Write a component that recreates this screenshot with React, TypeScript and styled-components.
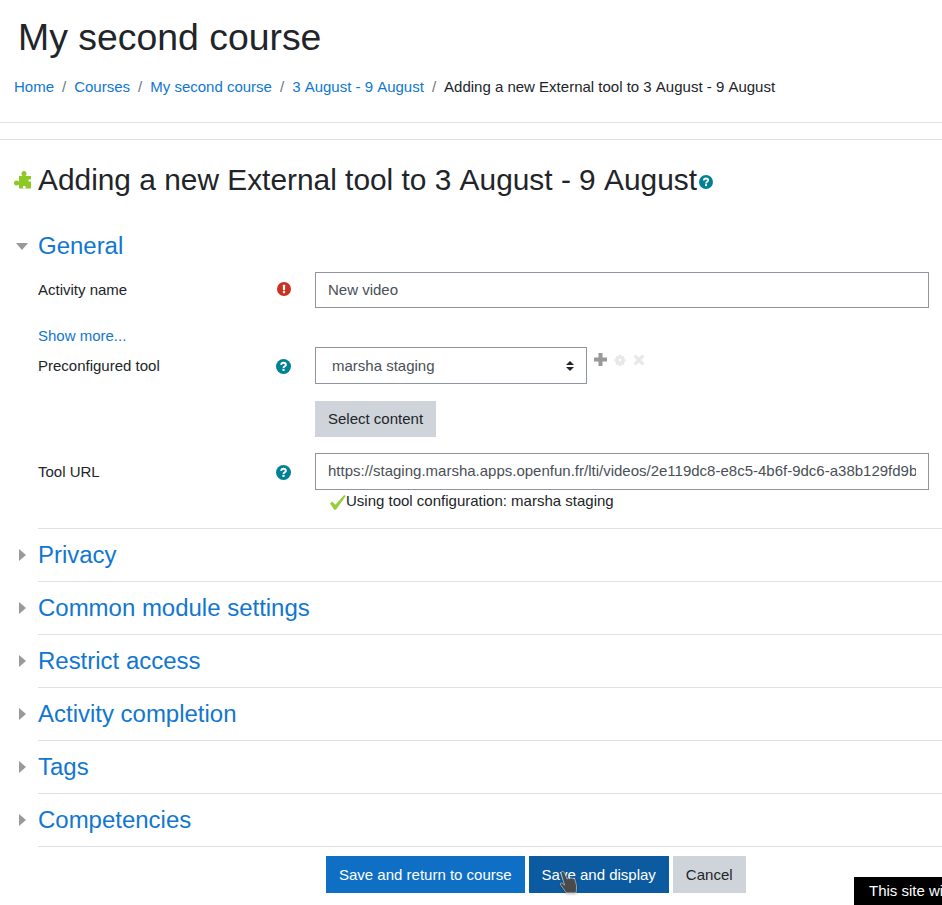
import React from 'react';
import styled, {createGlobalStyle} from 'styled-components';

const GlobalStyle = createGlobalStyle`
  html, body {
    margin: 0;
    padding: 0;
    background: #fff;
    overflow: hidden;
  }
  body {
    height: 905px;
    font-family: "Liberation Sans", Arial, sans-serif;
    font-size: 15px;
    line-height: 22.5px;
    color: #212529;
  }
`;

const Page = styled.div`
  width: 942px;
  height: 905px;
  position: relative;
  overflow: hidden;
`;

const CourseHeader = styled.header`
  height: 123px;
  padding: 15px 0 0 14px;
  box-sizing: border-box;
  border-bottom: 1px solid #dee2e6;
  margin-bottom: 16px;
`;

const CourseTitle = styled.h1`
  margin: 0 0 0 4px;
  font-size: 37.4px;
  line-height: 45px;
  font-weight: 400;
`;

const Breadcrumb = styled.nav`
  display: flex;
  margin-top: 16px;
`;

const Crumb = styled.a`
  color: #1177d1;
  text-decoration: none;
`;

const CrumbSep = styled.span`
  padding: 0 8px;
  color: #6c757d;
`;

const Main = styled.main`
  border-top: 1px solid #dee2e6;
  padding: 20px 0 0 14px;
`;

const PageHeading = styled.h2`
  display: flex;
  align-items: center;
  margin: 0;
  height: 40px;
  font-size: 29.86px;
  line-height: 40px;
  font-weight: 400;
`;

const PuzzleBox = styled.span`
  width: 24px;
  display: flex;
  align-items: center;
`;

const HeadingHelp = styled.span`
  display: flex;
  margin: 3px 0 0 2px;
`;

const SectionHead = styled.div<{$open?: boolean}>`
  display: flex;
  align-items: center;
  height: ${p => (p.$open ? '34px' : '52px')};
  margin-top: ${p => (p.$open ? '29px' : '0')};
`;

const ArrowCell = styled.span`
  width: 24px;
  display: flex;
  align-items: center;
`;

const SectionTitle = styled.a`
  color: #1177d1;
  font-size: 23.97px;
  line-height: 28px;
`;

const Collapsed = styled.div`
  margin-left: 24px;
  border-top: 1px solid #dee2e6;
`;

const CollapsedHead = styled(SectionHead)`
  margin-left: -24px;
`;

const GeneralFields = styled.div`
  margin-top: 9px;
  margin-bottom: 16px;
`;

const Row = styled.div`
  display: grid;
  grid-template-columns: 239px 38px 614px;
  margin-left: 24px;
`;

const Label = styled.label<{$top: number}>`
  padding-top: ${p => p.$top}px;
`;

const IconCell = styled.span<{$top: number; $left?: number}>`
  padding-top: ${p => p.$top}px;
  margin-left: ${p => p.$left ?? 0}px;
  display: block;
`;

const TextInput = styled.div<{$tall?: boolean}>`
  box-sizing: border-box;
  width: 614px;
  height: ${p => (p.$tall ? '37px' : '36px')};
  border: 1px solid #8f959e;
  padding: 0 12px;
  line-height: 34px;
  color: #495057;
`;

const InputText = styled.span`
  display: block;
  white-space: nowrap;
  overflow: hidden;
`;

const ShowMore = styled.a`
  display: block;
  margin: 17px 0 0 24px;
  color: #1177d1;
  height: 22px;
  line-height: 22px;
`;

const FakeSelect = styled.div`
  box-sizing: border-box;
  width: 272px;
  height: 37px;
  border: 1px solid #8f959e;
  padding-left: 16px;
  line-height: 35px;
  color: #495057;
  display: flex;
  justify-content: space-between;
  align-items: center;
`;

const SelectCaret = styled.span`
  display: flex;
  margin-right: 12px;
`;

const SelectWrap = styled.div`
  display: flex;
  align-items: flex-start;
`;

const ToolIcons = styled.span`
  display: flex;
  align-items: center;
  gap: 7px;
  margin: 6px 0 0 7px;
`;

const Grey = styled.button`
  display: block;
  border: 0;
  font: inherit;
  color: #212529;
  background: #ced4da;
  height: 36px;
  padding: 0 13px;
`;

const SelectContent = styled(Grey)`
  margin: 17px 0 16px 0;
`;

const ConfigNote = styled.div`
  display: flex;
  align-items: center;
  height: 22px;
  margin: 0 0 0 15px;
`;

const Buttons = styled.div`
  display: flex;
  gap: 4px;
  margin-top: 9px;
  padding-left: 312px;
`;

const Primary = styled.button<{$hover?: boolean}>`
  border: 0;
  font: inherit;
  color: #fff;
  background: ${p => (p.$hover ? '#0c5a9f' : '#0f6fc5')};
  height: 37px;
  padding: 1px 13px 0;
`;

const Cancel = styled(Grey)`
  height: 37px;
  padding-top: 1px;
`;

const Pointer = styled.svg`
  position: absolute;
  left: 558px;
  top: 870px;
  filter: drop-shadow(0 1px 1px rgba(0, 0, 0, 0.3));
`;

const Notice = styled.div`
  position: absolute;
  left: 854px;
  top: 877px;
  width: 120px;
  height: 28px;
  background: #000;
  color: #fff;
  padding-left: 15px;
  line-height: 28px;
  white-space: nowrap;
`;

const ArrowDownSvg = styled.svg`
  margin-left: 2px;
`;

const ArrowRightSvg = styled.svg`
  margin-left: 5px;
`;

const CheckSvg = styled.svg`
  margin-top: 3px;
`;

const Puzzle = () => (
  <svg width="17" height="18" viewBox="0 0 17 18">
    <g fill="#8cc924">
      <circle cx="10" cy="2.500" r="2.500" />
      <rect x="8.500" y="4" width="3" height="2" />
      <rect x="5" y="5" width="12" height="12.500" />
      <circle cx="2.500" cy="12" r="2.500" />
      <rect x="3" y="10.500" width="3" height="3" />
    </g>
    <rect x="14.500" y="8.500" width="2.500" height="2" fill="#fff" />
    <rect x="9" y="15" width="2.500" height="2.500" fill="#fff" />
  </svg>
);

const HelpIcon = ({size = 14}: {size?: number}) => (
  <svg width={size} height={size} viewBox="0 0 14 14">
    <circle cx="7" cy="7" r="7" fill="#008196" />
    <path d="M4.800 5.500C4.900 4.300 5.800 3.500 7 3.500c1.300 0 2.200.8 2.200 1.800C9.200 6.800 7 6.900 7 8.500" fill="none" stroke="#fff" strokeWidth="1.800" />
    <rect x="6" y="9.200" width="2" height="1.900" fill="#fff" />
  </svg>
);

const ErrorIcon = () => (
  <svg width="14" height="14" viewBox="0 0 14 14">
    <circle cx="7" cy="7" r="7" fill="#ca3120" />
    <rect x="5.900" y="2.800" width="2.200" height="5.400" rx=".4" fill="#fff" />
    <rect x="5.900" y="9.100" width="2.200" height="2.100" rx=".4" fill="#fff" />
  </svg>
);

const ArrowDown = () => (
  <ArrowDownSvg width="12" height="7" viewBox="0 0 12 7">
    <path d="M0 0h12L6 7z" fill="#999" />
  </ArrowDownSvg>
);

const ArrowRight = () => (
  <ArrowRightSvg width="7" height="12" viewBox="0 0 7 12">
    <path d="M0 0l7 6-7 6z" fill="#999" />
  </ArrowRightSvg>
);

const Check = () => (
  <CheckSvg width="16" height="15" viewBox="0 0 16 15">
    <path d="M0 8.500l2.400-1.900 2.900 3.100L14.200 0l1.500 1L6 14.800H4.300z" fill="#95cf3c" />
  </CheckSvg>
);

const PlusIcon = () => (
  <svg width="13" height="13" viewBox="0 0 13 13">
    <path d="M4.500 0h4v4.500H13v4H8.500V13h-4V8.500H0v-4h4.500z" fill="#999" />
  </svg>
);

const CogIcon = () => (
  <svg width="12" height="12" viewBox="0 0 14 14">
    <path
      fill="#e8e8e8"
      fillRule="evenodd"
      d="M5.500 1h3l.4 2 1.600-1 2 2-1 1.600 2 .4v3l-2 .4 1 1.600-2 2-1.600-1-.4 2h-3l-.4-2-1.600 1-2-2 1-1.600-2-.4V6l2-.4-1-1.600 2-2 1.600 1zM7 5.500a1.500 1.500 0 1 0 0 3 1.500 1.500 0 0 0 0-3z"
    />
  </svg>
);

const CrossIcon = () => (
  <svg width="12" height="12" viewBox="0 0 14 14">
    <path d="M3 .5l4 4 4-4L13.500 3l-4 4 4 4-2.500 2.500-4-4-4 4L.5 11l4-4-4-4z" fill="#e8e8e8" />
  </svg>
);

const week = '3\u00a0August - 9\u00a0August';
const crumbs = ['Home', 'Courses', 'My second course', week];
const sections = ['Privacy', 'Common module settings', 'Restrict access', 'Activity completion', 'Tags', 'Competencies'];

export default function App() {
  return (
    <Page>
      <GlobalStyle />
      <CourseHeader>
        <CourseTitle>My second course</CourseTitle>
        <Breadcrumb>
          {crumbs.map(c => (
            <React.Fragment key={c}>
              <Crumb>{c}</Crumb>
              <CrumbSep>/</CrumbSep>
            </React.Fragment>
          ))}
          <span>Adding a new External tool to {week}</span>
        </Breadcrumb>
      </CourseHeader>
      <Main>
        <PageHeading>
          <PuzzleBox>
            <Puzzle />
          </PuzzleBox>
          Adding a new External tool to {week}
          <HeadingHelp>
            <HelpIcon />
          </HeadingHelp>
        </PageHeading>

        <SectionHead $open>
          <ArrowCell>
            <ArrowDown />
          </ArrowCell>
          <SectionTitle>General</SectionTitle>
        </SectionHead>

        <GeneralFields>
          <Row>
            <Label $top={7}>Activity name</Label>
            <IconCell $top={8}>
              <ErrorIcon />
            </IconCell>
            <TextInput>
              <InputText>New video</InputText>
            </TextInput>
          </Row>
          <ShowMore>Show more...</ShowMore>
          <Row>
            <Label $top={8}>Preconfigured tool</Label>
            <IconCell $top={11} $left={-1}>
              <HelpIcon size={15} />
            </IconCell>
            <div>
              <SelectWrap>
                <FakeSelect>
                  marsha staging
                  <SelectCaret>
                    <svg width="8" height="10" viewBox="0 0 8 10">
                      <path d="M4 0l4 4H0zM4 10L0 6h8z" fill="#212529" />
                    </svg>
                  </SelectCaret>
                </FakeSelect>
                <ToolIcons>
                  <PlusIcon />
                  <CogIcon />
                  <CrossIcon />
                </ToolIcons>
              </SelectWrap>
              <SelectContent>Select content</SelectContent>
            </div>
          </Row>
          <Row>
            <Label $top={8}>Tool URL</Label>
            <IconCell $top={11} $left={-1}>
              <HelpIcon size={15} />
            </IconCell>
            <div>
              <TextInput $tall>
                <InputText>https://staging.marsha.apps.openfun.fr/lti/videos/2e119dc8-e8c5-4b6f-9dc6-a38b129fd9b6</InputText>
              </TextInput>
              <ConfigNote>
                <Check />
                Using tool configuration: marsha staging
              </ConfigNote>
            </div>
          </Row>
        </GeneralFields>

        {sections.map(s => (
          <Collapsed key={s}>
            <CollapsedHead>
              <ArrowCell>
                <ArrowRight />
              </ArrowCell>
              <SectionTitle>{s}</SectionTitle>
            </CollapsedHead>
          </Collapsed>
        ))}
        <Collapsed />

        <Buttons>
          <Primary>Save and return to course</Primary>
          <Primary $hover>Save and display</Primary>
          <Cancel>Cancel</Cancel>
        </Buttons>
      </Main>
      <Pointer width="20" height="24" viewBox="0 0 17 21">
        <path
          d="M3 1.500c1-.6 2 0 2.400 1L7.800 8c.2-1 1.600-1.200 2.200-.4.300-.8 1.700-.9 2.200 0 .5-.6 1.800-.5 2.200.4l1.200 4c.6 2.400.4 5 0 8H7l-5-7c-.6-1 .5-2.200 1.500-1.400l2 1.600L2.600 3.500c-.3-.8-.1-1.600.4-2z"
          fill="#4a4a4a"
          stroke="rgba(255,255,255,0.7)"
          strokeWidth="0.6"
        />
      </Pointer>
      <Notice>This site will</Notice>
    </Page>
  );
}
